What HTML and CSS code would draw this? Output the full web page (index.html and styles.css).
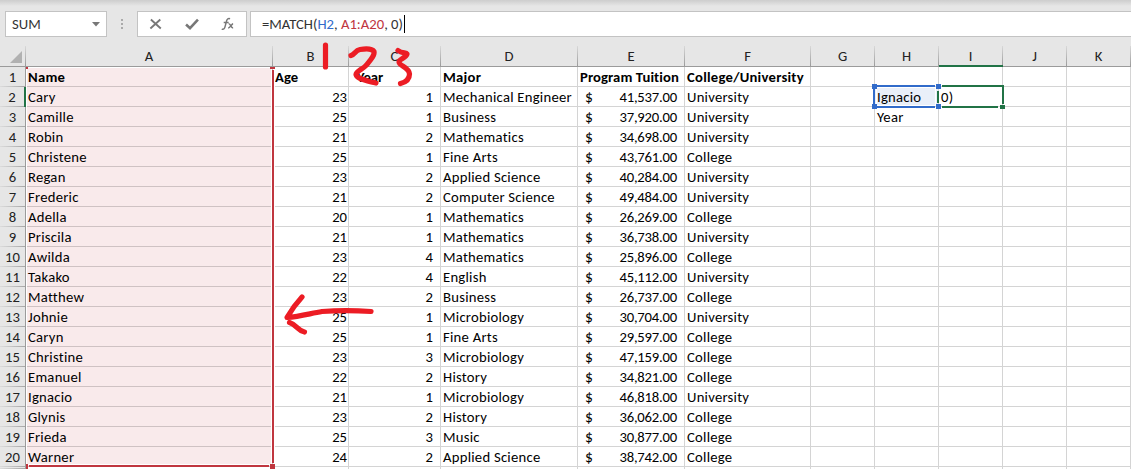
FILE: index.html
```
<!DOCTYPE html>
<html lang="en">
<head>
<meta charset="utf-8">
<title>Spreadsheet</title>
<link rel="stylesheet" href="styles.css">
</head>
<body>
<div class="app">
  <header class="formula-bar">
    <div class="box name-box"><span>SUM</span><svg width="8" height="5" viewBox="0 0 8 5"><path d="M0 0h8L4 4.5z" fill="#777"/></svg></div>
    <svg class="grip" width="2" height="11" viewBox="0 0 2 11"><path d="M0 0h2v2H0zM0 4h2v2H0zM0 8h2v2H0z" fill="#aaa"/></svg>
    <div class="box actions">
      <svg width="109" height="24" viewBox="0 0 109 24" fill="none" stroke="#777">
        <path d="M13 7.500l10 9M22.500 7.500l-10 9" stroke-width="1.900"/>
        <path d="M48.500 12.500l4 3.700 8-8.500" stroke-width="2.600"/>
        <path d="M84.500 17.200c2 .8 3-.7 3.500-3l1.400-5.400c.6-2 1.700-2.800 3.500-2.100M86.500 10.500h5M91.500 12c2-1 2 4 4.500 4M96 11.700c-1.500.2-3 4.400-5 4.400" stroke-width="1.500"/>
      </svg>
    </div>
    <div class="box formula"><span class="expr">=MATCH(<span class="ref-blue">H2</span>, <span class="ref-red">A1:A20</span>, 0)</span><span class="caret"></span></div>
  </header>
  <main class="sheet">
    <div class="row head"><div class="corner"><svg width="12" height="12" viewBox="0 0 12 12"><path d="M12 0v12H0z" fill="#b1b1b1"/></svg></div><div>A</div><div>B</div><div>C</div><div>D</div><div>E</div><div>F</div><div>G</div><div>H</div><div class="current">I</div><div>J</div><div>K</div></div>
    <div class="row titles"><b>1</b><p>Name</p><p>Age</p><p class="year">Year</p><p>Major</p><p class="tuition">Program Tuition</p><p class="school">College/University</p><p></p><p></p><p></p><p></p><p></p></div>
    <div class="row"><b class="active">2</b><p>Cary</p><p>23</p><p>1</p><p>Mechanical Engineer</p><p><i>$</i>41,537.00</p><p>University</p><p></p><p class="picked">Ignacio</p><p class="editing">0)</p><p></p><p></p></div>
    <div class="row"><b>3</b><p>Camille</p><p>25</p><p>1</p><p>Business</p><p><i>$</i>37,920.00</p><p>University</p><p></p><p>Year</p><p></p><p></p><p></p></div>
    <div class="row"><b>4</b><p>Robin</p><p>21</p><p>2</p><p>Mathematics</p><p><i>$</i>34,698.00</p><p>University</p><p></p><p></p><p></p><p></p><p></p></div>
    <div class="row"><b>5</b><p>Christene</p><p>25</p><p>1</p><p>Fine Arts</p><p><i>$</i>43,761.00</p><p>College</p><p></p><p></p><p></p><p></p><p></p></div>
    <div class="row"><b>6</b><p>Regan</p><p>23</p><p>2</p><p>Applied Science</p><p><i>$</i>40,284.00</p><p>University</p><p></p><p></p><p></p><p></p><p></p></div>
    <div class="row"><b>7</b><p>Frederic</p><p>21</p><p>2</p><p>Computer Science</p><p><i>$</i>49,484.00</p><p>University</p><p></p><p></p><p></p><p></p><p></p></div>
    <div class="row"><b>8</b><p>Adella</p><p>20</p><p>1</p><p>Mathematics</p><p><i>$</i>26,269.00</p><p>College</p><p></p><p></p><p></p><p></p><p></p></div>
    <div class="row"><b>9</b><p>Priscila</p><p>21</p><p>1</p><p>Mathematics</p><p><i>$</i>36,738.00</p><p>University</p><p></p><p></p><p></p><p></p><p></p></div>
    <div class="row"><b>10</b><p>Awilda</p><p>23</p><p>4</p><p>Mathematics</p><p><i>$</i>25,896.00</p><p>College</p><p></p><p></p><p></p><p></p><p></p></div>
    <div class="row"><b>11</b><p>Takako</p><p>22</p><p>4</p><p>English</p><p><i>$</i>45,112.00</p><p>University</p><p></p><p></p><p></p><p></p><p></p></div>
    <div class="row"><b>12</b><p>Matthew</p><p>23</p><p>2</p><p>Business</p><p><i>$</i>26,737.00</p><p>College</p><p></p><p></p><p></p><p></p><p></p></div>
    <div class="row"><b>13</b><p>Johnie</p><p>25</p><p>1</p><p>Microbiology</p><p><i>$</i>30,704.00</p><p>University</p><p></p><p></p><p></p><p></p><p></p></div>
    <div class="row"><b>14</b><p>Caryn</p><p>25</p><p>1</p><p>Fine Arts</p><p><i>$</i>29,597.00</p><p>College</p><p></p><p></p><p></p><p></p><p></p></div>
    <div class="row"><b>15</b><p>Christine</p><p>23</p><p>3</p><p>Microbiology</p><p><i>$</i>47,159.00</p><p>College</p><p></p><p></p><p></p><p></p><p></p></div>
    <div class="row"><b>16</b><p>Emanuel</p><p>22</p><p>2</p><p>History</p><p><i>$</i>34,821.00</p><p>College</p><p></p><p></p><p></p><p></p><p></p></div>
    <div class="row"><b>17</b><p>Ignacio</p><p>21</p><p>1</p><p>Microbiology</p><p><i>$</i>46,818.00</p><p>University</p><p></p><p></p><p></p><p></p><p></p></div>
    <div class="row"><b>18</b><p>Glynis</p><p>23</p><p>2</p><p>History</p><p><i>$</i>36,062.00</p><p>College</p><p></p><p></p><p></p><p></p><p></p></div>
    <div class="row"><b>19</b><p>Frieda</p><p>25</p><p>3</p><p>Music</p><p><i>$</i>30,877.00</p><p>College</p><p></p><p></p><p></p><p></p><p></p></div>
    <div class="row"><b>20</b><p>Warner</p><p>24</p><p>2</p><p>Applied Science</p><p><i>$</i>38,742.00</p><p>College</p><p></p><p></p><p></p><p></p><p></p></div>
    <div class="row below"><b></b><p></p><p></p><p></p><p></p><p></p><p></p><p></p><p></p><p></p><p></p><p></p></div>
  </main>
  <svg class="overlay" width="1131" height="469" viewBox="0 0 1131 469">
    <!-- range outline on column A -->
    <g shape-rendering="crispEdges">
      <path d="M26 67h1v402h-1zM27 67h244v1H27zM271 68h1v396h-1zM28 464h242v1H28zM274 68h1v395h-1zM28 467h242v1H28z" fill="#fff"/>
      <path d="M26 67h2v2h-2zM270 67h5v2h-5zM272 70h2v393h-2zM29 465h240v2H29zM26 464h2v5h-2zM270 464h5v5h-5z" fill="#c0363f"/>
      <!-- edited cell I2 -->
      <path d="M942 85h62v2h-62zM1002 85h2v19h-2zM942 106h56v2h-56zM1000 105h5v4h-5z" fill="#217346"/>
      <path d="M937 91h2v12h-2z" fill="#217346"/>
      <!-- referenced cell H2 -->
      <path d="M876 87h60v1h-60zM876 105h60v1h-60zM876 88h1v17h-1zM935 88h1v17h-1z" fill="#fff"/>
      <path d="M877 85h58v2h-58zM877 106h58v2h-58zM873 89h2v15h-2zM872 84h5v5h-5zM936 84h5v5h-5zM872 104h5v5h-5zM936 104h5v5h-5z" fill="#316bca"/>
    </g>
    <!-- pen marks -->
    <g fill="none" stroke="#ec1c24" stroke-width="5.200" stroke-linecap="round" stroke-linejoin="round">
      <path d="M325.500 45V67"/>
      <path d="M351 55.500c4-1 4-5 9-6 6-1 12-1 14 2 1 4-4 9-8 14-4 4-10 6-10 9 1 4 9 6 20 8.500"/>
      <path d="M398 50.500c4 3 8 2 9 3.500-1 4-8 5-8 8 0 4 10 5 10.500 12 0 5-3 8-9 9.500"/>
      <path d="M371 311.500c-15-1-35-1-49 0-12 2-22 5-35 6 4-7 9-14 15-20.500M289.500 322.500c7 2 8 8 15 9.500"/>
    </g>
  </svg>
</div>
</body>
</html>
```
FILE: styles.css
```
* { box-sizing: border-box; }
body { margin: 0; overflow: hidden; }
.app {
  position: relative;
  width: 1131px;
  height: 469px;
  overflow: hidden;
  background: #e6e6e6;
  font: 14.67px/20px Carlito, Calibri, Lato, sans-serif;
  font-variant-ligatures: none;
  color: #000;
}
.formula-bar {
  display: flex;
  align-items: flex-start;
  height: 46px;
  padding: 11px 0 0 5px;
  background: linear-gradient(#cdcdcd, #e6e6e6 6px);
  color: #333;
}
.box {
  display: flex;
  align-items: center;
  height: 26px;
  border: 1px solid #c3c3c3;
  background: #fff;
}
.name-box { width: 102px; justify-content: space-between; padding: 0 6px; }
.grip { margin: 8px 14px 0; }
.actions { width: 110px; }
.formula { flex: 1; margin-left: 3px; padding-left: 11px; border-right: 0; }
.expr { white-space: pre; }
.ref-blue { color: #316bca; }
.ref-red { color: #c0363f; }
.caret { width: 1px; height: 18px; margin-left: 1px; background: #000; }
.row {
  display: grid;
  grid-template-columns: 26px 247px 76px 92px 137px 107px 126px repeat(5, 64px);
  grid-template-rows: 20px;
  height: 20px;
  background: #fff;
}
.row p {
  margin: 0;
  padding: 0 2px;
  border-right: 1px solid #d4d4d4;
  border-bottom: 1px solid #d4d4d4;
  white-space: nowrap;
  line-height: 21px;
  letter-spacing: .25px;
}
.row p:nth-child(2) {
  background: #f9eaeb;
  border-color: #cfc2c3;
}
.row p:nth-child(3), .row p:nth-child(4) { text-align: right; padding-right: 1px; letter-spacing: 0; }
.row p:nth-child(4) { padding-right: 7px; }
.row p:nth-child(6) { display: flex; justify-content: space-between; padding: 0 7px; letter-spacing: -.2px; }
.row i { font-style: normal; font-size: 15.5px; }
.row b {
  border-right: 1px solid #9b9b9b;
  background: linear-gradient(90deg, #dcdcdc, #a6a6a6) bottom / 100% 1px no-repeat #e6e6e6;
  color: #222;
  font-weight: 400;
  line-height: 21px;
  text-align: center;
}
.row b.active { border-right: 2px solid #217346; }
.titles p { font-weight: 700; }
.row.titles p:nth-child(3) { text-align: left; }
.row.titles p:nth-child(4) { text-align: left; padding-left: 8px; }
.row.titles p:nth-child(6) { padding: 0 2px; letter-spacing: .1px; }
.row .picked { background: #e9eff9; }
.head {
  height: 21px;
  background: #e6e6e6;
  border-bottom: 1px solid #9b9b9b;
  color: #222;
  text-align: center;
  line-height: 20px;
}
.head > div { padding-right: 1px; background: linear-gradient(#d8d8d8, #9b9b9b) right / 1px 100% no-repeat; }
.head .corner { padding: 5px 4px 0 0; line-height: 0; text-align: right; }
.head .current { height: 21px; border-bottom: 2px solid #217346; }
.row.below { grid-template-rows: 2px; height: 2px; overflow: hidden; }
.below p, .below b { padding: 0; border-bottom: 0; }
.below p:nth-child(2) { background: #fff; }
.overlay { position: absolute; left: 0; top: 0; }
```
